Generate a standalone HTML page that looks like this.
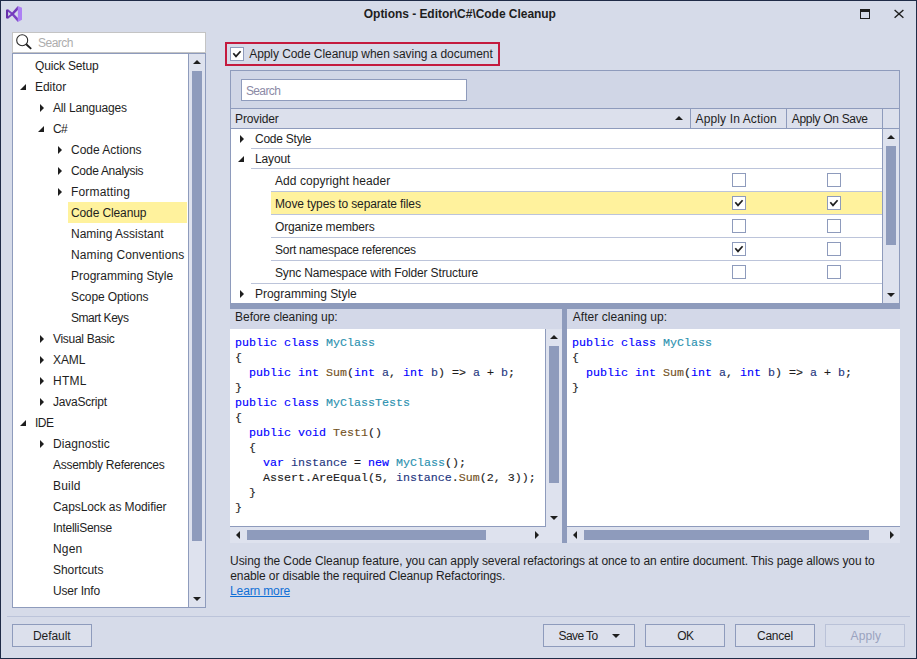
<!DOCTYPE html>
<html><head><meta charset="utf-8"><title>Options - Editor\C#\Code Cleanup</title>
<style>
html,body{margin:0;padding:0;}
body{width:917px;height:659px;overflow:hidden;background:#D6DBE9;font-family:"Liberation Sans",sans-serif;font-size:12px;color:#1e1e1e;position:relative;}
#root, #root div, #root svg{position:absolute;box-sizing:border-box;}
#root svg{overflow:visible;}
#win{left:0;top:0;width:917px;height:659px;border:1px solid #1f2b47;}
.t{white-space:nowrap;line-height:16px;height:16px;}
.box{border:1px solid #8E9BBC;}
.white{background:#fff;}
.thumb{background:#8E9BBC;}
.track{background:#DEE2EE;}
.btn{border:1px solid #8E9BBC;background:#DCE0EC;height:23px;top:624px;}
.hl{background:#FFF29D;}
.cb{width:14px;height:14px;border:1px solid #8E9BBC;background:#fff;}
.code{font-family:"Liberation Mono",monospace;font-size:11.67px;line-height:15px;white-space:pre;color:#1e1e1e;-webkit-text-stroke:0.14px;}
.k{color:#0000ff;}
.c{color:#2B91AF;}
.m{color:#74531F;}
.v{color:#1F377F;}
</style></head>
<body>
<div id="root" style="left:0;top:0;width:917px;height:659px;">
<div id="win"></div>

<!-- title bar -->
<svg style="left:6px;top:6px" width="17" height="17" viewBox="0 0 17 17">
  <path d="M11.85 0 L16 1.84 L16 13.86 L11.85 16 Z" fill="#AD80F4"/>
  <path d="M2 3.17 L8 8 L11.85 12 L11.85 16 L6.15 9.55 L4.84 8 L2 5.85 Z" fill="#7A40C4"/>
  <path d="M2 12.85 L8 8 L11.85 4 L11.85 0 L6.15 6.48 L4.84 8 L2 10.18 Z" fill="#733ABC"/>
  <path d="M0 3.84 L2.1 3.17 L2.1 12.85 L0 12.19 Z" fill="#6630AA"/>
</svg>
<div class="t" style="left:363.80px;top:6px;letter-spacing:-0.039px;font-weight:bold;">Options - Editor\C#\Code Cleanup</div>
<svg style="left:860px;top:9px" width="10" height="10"><rect x="0.5" y="0.5" width="9" height="9" fill="none" stroke="#1e1e1e"/><rect x="0" y="0" width="10" height="3" fill="#1e1e1e"/></svg>
<svg style="left:894px;top:9px" width="10" height="10"><path d="M0.6 1.0 L9.4 8.8 M9.4 1.0 L0.6 8.8" stroke="#1e1e1e" stroke-width="1.4" fill="none"/></svg>

<!-- left search -->
<div class="white" style="left:12px;top:32px;width:194px;height:21px;border:1px solid #C4C4C4;"></div>
<svg style="left:16px;top:34px" width="17" height="17"><circle cx="6.2" cy="6.2" r="5.5" fill="none" stroke="#2a2a2a" stroke-width="1.1"/><path d="M10.2 10.3 L15.2 14.9" stroke="#1e1e1e" stroke-width="1.9"/></svg>
<div class="t" style="left:38.00px;top:35px;letter-spacing:-0.520px;color:#ADADAD;">Search</div>

<!-- tree -->
<div class="white box" style="left:12px;top:53px;width:194px;height:555px;"></div>
<div class="track" style="left:188px;top:54px;width:17px;height:553px;border-left:1px solid #8E9BBC;"></div>
<div class="thumb" style="left:192px;top:71px;width:10px;height:470px;"></div>
<svg style="left:193px;top:60px" width="8" height="4"><path d="M0 4 L4 0 L8 4 Z" fill="#1e1e1e"/></svg>
<svg style="left:193px;top:597px" width="8" height="4"><path d="M0 0 L4 4 L8 0 Z" fill="#1e1e1e"/></svg>
<div class="hl" style="left:68px;top:202px;width:119px;height:21px;"></div>
<div class="t" style="left:35.00px;top:58px;letter-spacing:-0.170px;">Quick Setup</div>
<div class="t" style="left:35.00px;top:79px;letter-spacing:-0.040px;">Editor</div>
<svg style="left:20px;top:84px" width="6" height="6"><path d="M6 0 L6 6 L0 6 Z" fill="#1e1e1e"/></svg>
<div class="t" style="left:53.00px;top:100px;letter-spacing:-0.175px;">All Languages</div>
<svg style="left:40px;top:104px" width="4" height="8"><path d="M0 0 L4 4 L0 8 Z" fill="#1e1e1e"/></svg>
<div class="t" style="left:53.00px;top:121px;letter-spacing:-0.600px;">C#</div>
<svg style="left:38px;top:126px" width="6" height="6"><path d="M6 0 L6 6 L0 6 Z" fill="#1e1e1e"/></svg>
<div class="t" style="left:71.00px;top:142px;letter-spacing:-0.009px;">Code Actions</div>
<svg style="left:58px;top:146px" width="4" height="8"><path d="M0 0 L4 4 L0 8 Z" fill="#1e1e1e"/></svg>
<div class="t" style="left:71.00px;top:163px;letter-spacing:-0.292px;">Code Analysis</div>
<svg style="left:58px;top:167px" width="4" height="8"><path d="M0 0 L4 4 L0 8 Z" fill="#1e1e1e"/></svg>
<div class="t" style="left:71.00px;top:184px;letter-spacing:0.167px;">Formatting</div>
<svg style="left:58px;top:188px" width="4" height="8"><path d="M0 0 L4 4 L0 8 Z" fill="#1e1e1e"/></svg>
<div class="t" style="left:71.00px;top:205px;letter-spacing:-0.118px;">Code Cleanup</div>
<div class="t" style="left:71.00px;top:226px;">Naming Assistant</div>
<div class="t" style="left:71.00px;top:247px;letter-spacing:0.106px;">Naming Conventions</div>
<div class="t" style="left:71.00px;top:268px;letter-spacing:0.006px;">Programming Style</div>
<div class="t" style="left:71.00px;top:289px;letter-spacing:-0.100px;">Scope Options</div>
<div class="t" style="left:71.00px;top:310px;letter-spacing:-0.456px;">Smart Keys</div>
<div class="t" style="left:53.00px;top:331px;letter-spacing:-0.300px;">Visual Basic</div>
<svg style="left:40px;top:335px" width="4" height="8"><path d="M0 0 L4 4 L0 8 Z" fill="#1e1e1e"/></svg>
<div class="t" style="left:53.00px;top:352px;letter-spacing:-0.067px;">XAML</div>
<svg style="left:40px;top:356px" width="4" height="8"><path d="M0 0 L4 4 L0 8 Z" fill="#1e1e1e"/></svg>
<div class="t" style="left:53.00px;top:373px;letter-spacing:0.233px;">HTML</div>
<svg style="left:40px;top:377px" width="4" height="8"><path d="M0 0 L4 4 L0 8 Z" fill="#1e1e1e"/></svg>
<div class="t" style="left:53.00px;top:394px;letter-spacing:-0.222px;">JavaScript</div>
<svg style="left:40px;top:398px" width="4" height="8"><path d="M0 0 L4 4 L0 8 Z" fill="#1e1e1e"/></svg>
<div class="t" style="left:35.00px;top:415px;letter-spacing:-0.500px;">IDE</div>
<svg style="left:20px;top:420px" width="6" height="6"><path d="M6 0 L6 6 L0 6 Z" fill="#1e1e1e"/></svg>
<div class="t" style="left:53.00px;top:436px;letter-spacing:0.078px;">Diagnostic</div>
<svg style="left:40px;top:440px" width="4" height="8"><path d="M0 0 L4 4 L0 8 Z" fill="#1e1e1e"/></svg>
<div class="t" style="left:53.00px;top:457px;letter-spacing:-0.278px;">Assembly References</div>
<div class="t" style="left:53.00px;top:478px;letter-spacing:0.200px;">Build</div>
<div class="t" style="left:53.00px;top:499px;letter-spacing:-0.095px;">CapsLock as Modifier</div>
<div class="t" style="left:53.00px;top:520px;letter-spacing:-0.264px;">IntelliSense</div>
<div class="t" style="left:53.00px;top:541px;letter-spacing:0.167px;">Ngen</div>
<div class="t" style="left:53.00px;top:562px;letter-spacing:-0.037px;">Shortcuts</div>
<div class="t" style="left:53.00px;top:583px;letter-spacing:-0.200px;">User Info</div>


<!-- top checkbox -->
<div style="left:225px;top:42px;width:275px;height:24px;border:2px solid #C41A3E;"></div>
<div class="cb" style="left:230px;top:47px;"></div><svg style="left:230px;top:47px" width="14" height="14"><path d="M3.3 6.2 L6.0 9.4 L10.6 4.2" stroke="#1e1e1e" stroke-width="1.7" fill="none"/></svg>
<div class="t" style="left:249.20px;top:46px;letter-spacing:-0.065px;">Apply Code Cleanup when saving a document</div>

<!-- grid -->
<div class="box" style="left:230px;top:70px;width:670px;height:238px;background:#D0D6E6;"></div>
<div class="white box" style="left:241px;top:79px;width:226px;height:22px;"></div>
<div class="t" style="left:245.90px;top:83px;letter-spacing:-0.600px;color:#8C8AA6;">Search</div>
<div style="left:231px;top:108px;width:668px;height:21px;border-top:1px solid #8E9BBC;border-bottom:1px solid #8E9BBC;background:#DCE0EC;"></div>
<div style="left:690px;top:109px;width:1px;height:19px;background:#8E9BBC;"></div>
<div style="left:786px;top:109px;width:1px;height:19px;background:#8E9BBC;"></div>
<div style="left:882px;top:109px;width:1px;height:19px;background:#8E9BBC;"></div>
<div class="t" style="left:235.10px;top:111px;letter-spacing:-0.157px;">Provider</div>
<div class="t" style="left:695.60px;top:111px;letter-spacing:0.121px;">Apply In Action</div>
<div class="t" style="left:791.80px;top:111px;letter-spacing:-0.317px;">Apply On Save</div>
<svg style="left:675px;top:116px" width="8" height="4"><path d="M0 4 L4 0 L8 4 Z" fill="#1e1e1e"/></svg>
<div class="white" style="left:231px;top:129px;width:652px;height:174px;"></div>
<div class="hl" style="left:271px;top:192px;width:611px;height:23px;"></div>
<div class="track" style="left:882px;top:129px;width:17px;height:174px;border-left:1px solid #8E9BBC;"></div>
<div class="thumb" style="left:886px;top:146px;width:10px;height:99px;"></div>
<svg style="left:887px;top:135px" width="8" height="4"><path d="M0 4 L4 0 L8 4 Z" fill="#1e1e1e"/></svg>
<svg style="left:887px;top:293px" width="8" height="4"><path d="M0 0 L4 4 L8 0 Z" fill="#1e1e1e"/></svg>
<div class="t" style="left:255.00px;top:131px;letter-spacing:-0.244px;">Code Style</div><svg style="left:240px;top:135px" width="4" height="8"><path d="M0 0 L4 4 L0 8 Z" fill="#1e1e1e"/></svg><div style="left:251px;top:148px;width:631px;height:1px;background:#BCC4DA;"></div>
<div class="t" style="left:255.00px;top:151px;letter-spacing:-0.120px;">Layout</div><svg style="left:238px;top:155.5px" width="6" height="6"><path d="M6 0 L6 6 L0 6 Z" fill="#1e1e1e"/></svg><div style="left:251px;top:168px;width:631px;height:1px;background:#BCC4DA;"></div>
<div class="t" style="left:275.00px;top:173px;letter-spacing:0.063px;">Add copyright header</div><div class="cb" style="left:732px;top:173px;"></div><div class="cb" style="left:827px;top:173px;"></div><div style="left:271px;top:191px;width:611px;height:1px;background:#BCC4DA;"></div>
<div class="t" style="left:275.00px;top:196px;letter-spacing:-0.130px;">Move types to separate files</div><div class="cb" style="left:732px;top:196px;"></div><svg style="left:732px;top:196px" width="14" height="14"><path d="M3.3 6.2 L6.0 9.4 L10.6 4.2" stroke="#1e1e1e" stroke-width="1.7" fill="none"/></svg><div class="cb" style="left:827px;top:196px;"></div><svg style="left:827px;top:196px" width="14" height="14"><path d="M3.3 6.2 L6.0 9.4 L10.6 4.2" stroke="#1e1e1e" stroke-width="1.7" fill="none"/></svg><div style="left:271px;top:214px;width:611px;height:1px;background:#BCC4DA;"></div>
<div class="t" style="left:275.00px;top:219px;letter-spacing:-0.160px;">Organize members</div><div class="cb" style="left:732px;top:219px;"></div><div class="cb" style="left:827px;top:219px;"></div><div style="left:271px;top:237px;width:611px;height:1px;background:#BCC4DA;"></div>
<div class="t" style="left:275.00px;top:242px;letter-spacing:-0.263px;">Sort namespace references</div><div class="cb" style="left:732px;top:242px;"></div><svg style="left:732px;top:242px" width="14" height="14"><path d="M3.3 6.2 L6.0 9.4 L10.6 4.2" stroke="#1e1e1e" stroke-width="1.7" fill="none"/></svg><div class="cb" style="left:827px;top:242px;"></div><div style="left:271px;top:260px;width:611px;height:1px;background:#BCC4DA;"></div>
<div class="t" style="left:275.00px;top:265px;letter-spacing:-0.140px;">Sync Namespace with Folder Structure</div><div class="cb" style="left:732px;top:265px;"></div><div class="cb" style="left:827px;top:265px;"></div><div style="left:251px;top:283px;width:631px;height:1px;background:#BCC4DA;"></div>
<div class="t" style="left:255.00px;top:286px;letter-spacing:-0.019px;">Programming Style</div><svg style="left:240px;top:290px" width="4" height="8"><path d="M0 0 L4 4 L0 8 Z" fill="#1e1e1e"/></svg>
<div class="thumb" style="left:230px;top:303px;width:670px;height:6px;"></div>

<!-- code panels -->
<div style="left:230px;top:309px;width:670px;height:20px;background:#D3D8E8;"></div>
<div class="thumb" style="left:562px;top:309px;width:5px;height:234px;"></div>
<div class="t" style="left:235.10px;top:309px;letter-spacing:-0.050px;">Before cleaning up:</div>
<div class="t" style="left:572.70px;top:309px;letter-spacing:0.059px;">After cleaning up:</div>
<div class="white" style="left:230px;top:329px;width:316px;height:198px;"></div>
<div class="track" style="left:546px;top:329px;width:16px;height:214px;"></div><div style="left:545px;top:329px;width:1px;height:198px;background:#8E9BBC;"></div>
<div class="track" style="left:230px;top:526px;width:316px;height:17px;border-top:1px solid #8E9BBC;"></div>
<div class="thumb" style="left:549px;top:346px;width:10px;height:137px;"></div>
<svg style="left:550px;top:335px" width="8" height="4"><path d="M0 4 L4 0 L8 4 Z" fill="#1e1e1e"/></svg>
<svg style="left:550px;top:516px" width="8" height="4"><path d="M0 0 L4 4 L8 0 Z" fill="#1e1e1e"/></svg>
<div class="thumb" style="left:247px;top:530px;width:239px;height:10px;"></div>
<svg style="left:236px;top:531px" width="4" height="8"><path d="M4 0 L0 4 L4 8 Z" fill="#1e1e1e"/></svg>
<svg style="left:535px;top:531px" width="4" height="8"><path d="M0 0 L4 4 L0 8 Z" fill="#1e1e1e"/></svg>

<div class="white" style="left:567px;top:329px;width:333px;height:198px;"></div>
<div class="track" style="left:567px;top:526px;width:333px;height:17px;border-top:1px solid #8E9BBC;"></div>
<div class="thumb" style="left:584px;top:530px;width:285px;height:10px;"></div>
<svg style="left:573px;top:531px" width="4" height="8"><path d="M4 0 L0 4 L4 8 Z" fill="#1e1e1e"/></svg>
<svg style="left:890px;top:531px" width="4" height="8"><path d="M0 0 L4 4 L0 8 Z" fill="#1e1e1e"/></svg>

<div class="code" style="left:235px;top:336px;"><span class="k">public</span> <span class="k">class</span> <span class="c">MyClass</span>
{
  <span class="k">public</span> <span class="k">int</span> <span class="m">Sum</span>(<span class="k">int</span> <span class="v">a</span>, <span class="k">int</span> <span class="v">b</span>) =&gt; <span class="v">a</span> + <span class="v">b</span>;
}
<span class="k">public</span> <span class="k">class</span> <span class="c">MyClassTests</span>
{
  <span class="k">public</span> <span class="k">void</span> <span class="m">Test1</span>()
  {
    <span class="k">var</span> <span class="v">instance</span> = <span class="k">new</span> <span class="c">MyClass</span>();
    Assert.AreEqual(5, <span class="v">instance</span>.<span class="m">Sum</span>(2, 3));
  }
}</div>
<div class="code" style="left:572px;top:336px;"><span class="k">public</span> <span class="k">class</span> <span class="c">MyClass</span>
{
  <span class="k">public</span> <span class="k">int</span> <span class="m">Sum</span>(<span class="k">int</span> <span class="v">a</span>, <span class="k">int</span> <span class="v">b</span>) =&gt; <span class="v">a</span> + <span class="v">b</span>;
}</div>

<!-- description -->
<div class="t" style="left:230.10px;top:553px;letter-spacing:-0.080px;">Using the Code Cleanup feature, you can apply several refactorings at once to an entire document. This page allows you to</div>
<div class="t" style="left:230.30px;top:568px;letter-spacing:-0.114px;">enable or disable the required Cleanup Refactorings.</div>
<div class="t" style="left:230.10px;top:583px;letter-spacing:-0.144px;color:#0F6FD6;text-decoration:underline;">Learn more</div>

<!-- bottom -->
<div style="left:7px;top:616px;width:903px;height:1px;background:#BCC4DA;"></div>
<div class="btn" style="left:12px;width:80px;"></div>
<div class="btn" style="left:543px;width:92px;"></div><svg style="left:612px;top:634px" width="8" height="4"><path d="M0 0 L4 4 L8 0 Z" fill="#1e1e1e"/></svg>
<div class="btn" style="left:645px;width:80px;"></div>
<div class="btn" style="left:735px;width:80px;"></div>
<div class="btn" style="left:825px;width:80px;border-color:#BAC2D8;background:#D9DEEB;"></div>
<div class="t" style="left:32.90px;top:628px;letter-spacing:-0.050px;">Default</div>
<div class="t" style="left:558.60px;top:628px;letter-spacing:-0.600px;">Save To</div>
<div class="t" style="left:677.20px;top:628px;letter-spacing:-0.600px;">OK</div>
<div class="t" style="left:757.00px;top:628px;letter-spacing:-0.240px;">Cancel</div>
<div class="t" style="left:850.60px;top:628px;letter-spacing:0.125px;color:#9AA3BF;">Apply</div>
</div>
</body></html>
